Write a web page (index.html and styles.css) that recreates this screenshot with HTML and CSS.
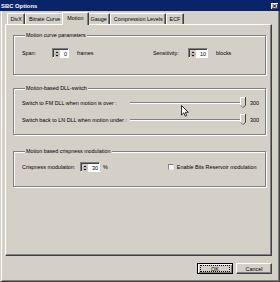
FILE: index.html
```html
<!DOCTYPE html>
<html>
<head>
<meta charset="utf-8">
<link rel="stylesheet" href="styles.css">
</head>
<body>
<div class="dialog">
  <div class="titlebar">
    <span class="title">SBC Options</span>
    <span class="close"><svg width="7" height="6" viewBox="0 0 7 6"><path d="M2 1.5L5 4.5M5 1.5L2 4.5" stroke="#000" stroke-width="1"/></svg></span>
  </div>
  <div class="body">
    <div class="tabs">
      <div class="tab">DivX</div>
      <div class="tab">Bitrate Curve</div>
      <div class="tab active">Motion</div>
      <div class="tab">Gauge</div>
      <div class="tab">Compression Levels</div>
      <div class="tab">ECF</div>
    </div>
    <div class="panel">
      <fieldset class="group g1">
        <legend>Motion curve parameters</legend>
        <div class="row">
          <div class="half">
            <span class="lbl-span">Span:</span>
            <span class="spin w17"><span class="arrows"><svg width="6" height="8" viewBox="0 0 6 8"><path d="M1.5 3L3 1.5L4.5 3Z M1.5 5L3 6.5L4.5 5Z" fill="#000"/><path d="M0 4H6" stroke="#808080" stroke-width="0.6"/></svg></span><span class="val">0</span></span>
            <span class="unit">frames</span>
          </div>
          <span class="lbl-sens">Sensitivity:</span>
          <span class="spin w20"><span class="arrows"><svg width="6" height="8" viewBox="0 0 6 8"><path d="M1.5 3L3 1.5L4.5 3Z M1.5 5L3 6.5L4.5 5Z" fill="#000"/><path d="M0 4H6" stroke="#808080" stroke-width="0.6"/></svg></span><span class="val">10</span></span>
          <span class="unit">blocks</span>
        </div>
      </fieldset>
      <fieldset class="group g2">
        <legend>Motion-based DLL-switch</legend>
        <div class="srow">
          <span class="slbl">Switch to FM DLL when motion is over :</span>
          <span class="slider"><span class="track"></span><svg class="thumb" width="6" height="11" viewBox="0 0 6 11"><path d="M0.5 0.5H5.5V8L3 10.5L0.5 8Z" fill="#d4d0c8"/><path d="M0.5 8.5V0.5H5" stroke="#fff" fill="none"/><path d="M5.5 0V8.2L3 10.7" stroke="#404040" fill="none"/><path d="M3 10.7L0.5 8.2" stroke="#808080" fill="none"/></svg></span>
          <span class="sval">300</span>
        </div>
        <div class="srow">
          <span class="slbl">Switch back to LN DLL when motion under :</span>
          <span class="slider"><span class="track"></span><svg class="thumb" width="6" height="11" viewBox="0 0 6 11"><path d="M0.5 0.5H5.5V8L3 10.5L0.5 8Z" fill="#d4d0c8"/><path d="M0.5 8.5V0.5H5" stroke="#fff" fill="none"/><path d="M5.5 0V8.2L3 10.7" stroke="#404040" fill="none"/><path d="M3 10.7L0.5 8.2" stroke="#808080" fill="none"/></svg></span>
          <span class="sval">300</span>
        </div>
      </fieldset>
      <fieldset class="group g3">
        <legend>Motion based crispness modulation</legend>
        <div class="row">
          <span class="lbl-crisp">Crispness modulation:</span>
          <span class="spin w20"><span class="arrows"><svg width="6" height="8" viewBox="0 0 6 8"><path d="M1.5 3L3 1.5L4.5 3Z M1.5 5L3 6.5L4.5 5Z" fill="#000"/><path d="M0 4H6" stroke="#808080" stroke-width="0.6"/></svg></span><span class="val">30</span></span>
          <span class="pct">%</span>
          <span class="check"></span>
          <span class="chklbl">Enable Bits Reservoir modulation</span>
        </div>
      </fieldset>
    </div>
    <div class="buttons">
      <button class="btn default"><span class="focus">OK</span></button>
      <button class="btn">Cancel</button>
    </div>
  </div>
  <svg class="cursor" width="8" height="12" viewBox="0 0 8 12"><path d="M0.5 0.5V10L2.8 7.8L4.3 11.2L5.7 10.6L4.3 7.3H7.3Z" fill="#fff" stroke="#000" stroke-width="0.8" stroke-linejoin="round"/></svg>
</div>
</body>
</html>
```
FILE: styles.css
```css
* { box-sizing: border-box; }
body {
  margin: 0;
  width: 280px;
  height: 282px;
  overflow: hidden;
  background: #d4d0c8;
  font-family: "Liberation Sans", Arial, sans-serif;
  font-size: 5.4px;
  color: #000;
}
.dialog {
  position: relative;
  width: 280px;
  height: 282px;
  background: #d4d0c8;
  display: flex;
  flex-direction: column;
  border: solid #404040;
  border-width: 0 1px 1px 1px;
  border-left-color: #d4d0c8;
  box-shadow: inset 1px 0 0 #fff, inset -1px -1px 0 #808080;
}
.titlebar {
  height: 11px;
  flex: none;
  background: #0a246a;
  color: #fff;
  display: flex;
  align-items: center;
  justify-content: space-between;
  padding: 0 2px 0 1px;
  margin: 0 -1px;
}
.title { font-weight: bold; font-size: 5.8px; letter-spacing: 0.05px; }
.close {
  width: 7px;
  height: 6px;
  background: #d4d0c8;
  box-shadow: inset 1px 1px 0 #fff, inset -1px -1px 0 #404040;
  display: flex;
}
.body {
  flex: 1;
  display: flex;
  flex-direction: column;
  padding: 2px 7px 0 4px;
}
.tabs {
  display: flex;
  align-items: flex-end;
  height: 11px;
  padding-left: 2px;
  position: relative;
  z-index: 1;
}
.tab {
  height: 11px;
  line-height: 10px;
  padding: 0 2.5px;
  border: 1px solid;
  border-color: #fff #404040 transparent #fff;
  border-bottom: 0;
  border-radius: 1px 1px 0 0;
  box-shadow: inset -1px 0 0 #808080;
  white-space: nowrap;
}
.tab.active {
  height: 13px;
  margin: 0 -2px -1px;
  padding: 0 4.5px 1px;
  background: #d4d0c8;
  position: relative;
  z-index: 2;
}
.panel {
  height: 232px;
  flex: none;
  border: 1px solid;
  border-color: #fff #404040 #404040 #fff;
  box-shadow: inset -1px -1px 0 #808080;
  padding: 7px 5px 0 7px;
  display: flex;
  flex-direction: column;
}
.group {
  margin: 0;
  border: 1px solid #808080;
  box-shadow: 1px 1px 0 #fff, inset 1px 1px 0 #fff;
  min-width: 0;
}
.group legend {
  padding: 0 1px;
  margin-left: 3px;
  line-height: 7px;
  background: #d4d0c8;
}
.g1 { padding: 9px 8px 16px; }
.g2 { margin-top: 10px; padding: 5px 3px 9px 8px; }
.g3 { margin-top: 13px; padding: 7px 8px 14px; }
.row {
  display: flex;
  align-items: center;
  height: 10px;
}
.half { width: 131px; display: flex; align-items: center; }
.lbl-span { width: 30px; }
.lbl-sens { width: 35px; }
.unit { margin-left: 8px; }
.spin {
  display: inline-flex;
  height: 10px;
  border: 1px solid;
  border-color: #808080 #fff #fff #808080;
  box-shadow: inset 1px 1px 0 #404040;
  background: #fff;
  padding: 1px 0 0 1px;
}
.w17 { width: 17px; }
.w20 { width: 20px; }
.arrows {
  width: 6px;
  height: 8px;
  background: #d4d0c8;
  display: flex;
}
.val {
  flex: 1;
  text-align: right;
  line-height: 8px;
  padding-right: 1px;
}
.lbl-crisp { width: 58px; }
.pct { margin-left: 3px; }
.check {
  width: 6px;
  height: 6px;
  margin-left: 60px;
  background: #fff;
  border: 1px solid;
  border-color: #808080 #e8e8e8 #e8e8e8 #808080;
}
.chklbl { margin-left: 3px; }
.srow {
  display: flex;
  align-items: center;
  height: 11px;
}
.srow + .srow { margin-top: 6px; }
.slbl { width: 108px; white-space: nowrap; }
.slider {
  flex: 1;
  display: flex;
  align-items: center;
  height: 11px;
}
.track {
  flex: 1;
  height: 2px;
  border-top: 1px solid #808080;
  border-bottom: 1px solid #fff;
}
.thumb { margin-left: -5px; flex: none; }
.sval { width: 16px; padding-left: 4px; }
.buttons {
  display: flex;
  justify-content: flex-end;
  gap: 3px;
  margin-top: 7px;
}
.btn {
  font: inherit;
  width: 36px;
  height: 11px;
  padding: 0;
  background: #d4d0c8;
  border: 1px solid;
  border-color: #fff #404040 #404040 #fff;
  box-shadow: inset -1px -1px 0 #808080;
  color: #000;
  display: flex;
  align-items: center;
  justify-content: center;
}
.btn.default {
  border: 1px solid #000;
  box-shadow: inset 1px 1px 0 #fff, inset -1px -1px 0 #808080;
}
.focus {
  width: 30px;
  height: 7px;
  line-height: 6px;
  text-align: center;
  border: 1px dotted #000;
}
.cursor {
  position: absolute;
  left: 180px;
  top: 105px;
}
```
